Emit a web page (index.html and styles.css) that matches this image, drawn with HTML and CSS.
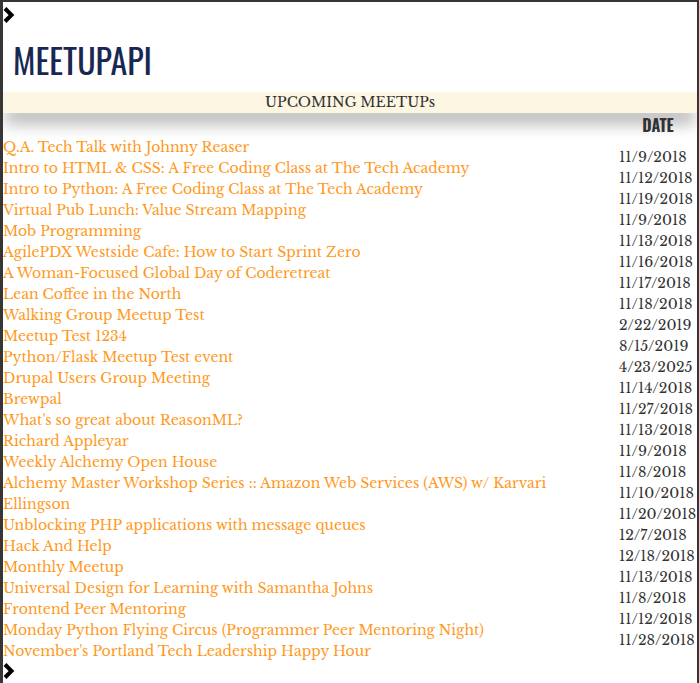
FILE: index.html
```
<!DOCTYPE html>
<html lang="en">
<head>
<meta charset="utf-8">
<title>MeetupAPI</title>
<link rel="stylesheet" href="styles.css">
</head>
<body>
<main class="panel">
  <svg class="chevron" viewBox="0 0 12 18" aria-hidden="true"><path d="M2 2.5 L8.5 9 L2 15.5"/></svg>
  <h1 class="title">MEETUPAPI</h1>
  <h2 class="banner">UPCOMING MEETUPs</h2>
  <div class="columns">
    <ul class="events">
      <li><a href="#">Q.A. Tech Talk with Johnny Reaser</a></li>
      <li><a href="#">Intro to HTML &amp; CSS: A Free Coding Class at The Tech Academy</a></li>
      <li><a href="#">Intro to Python: A Free Coding Class at The Tech Academy</a></li>
      <li><a href="#">Virtual Pub Lunch: Value Stream Mapping</a></li>
      <li><a href="#">Mob Programming</a></li>
      <li><a href="#">AgilePDX Westside Cafe: How to Start Sprint Zero</a></li>
      <li><a href="#">A Woman-Focused Global Day of Coderetreat</a></li>
      <li><a href="#">Lean Coffee in the North</a></li>
      <li><a href="#">Walking Group Meetup Test</a></li>
      <li><a href="#">Meetup Test 1234</a></li>
      <li><a href="#">Python/Flask Meetup Test event</a></li>
      <li><a href="#">Drupal Users Group Meeting</a></li>
      <li><a href="#">Brewpal</a></li>
      <li><a href="#">What's so great about ReasonML?</a></li>
      <li><a href="#">Richard Appleyar</a></li>
      <li><a href="#">Weekly Alchemy Open House</a></li>
      <li><a href="#">Alchemy Master Workshop Series :: Amazon Web Services (AWS) w/ Karvari Ellingson</a></li>
      <li><a href="#">Unblocking PHP applications with message queues</a></li>
      <li><a href="#">Hack And Help</a></li>
      <li><a href="#">Monthly Meetup</a></li>
      <li><a href="#">Universal Design for Learning with Samantha Johns</a></li>
      <li><a href="#">Frontend Peer Mentoring</a></li>
      <li><a href="#">Monday Python Flying Circus (Programmer Peer Mentoring Night)</a></li>
      <li><a href="#">November's Portland Tech Leadership Happy Hour</a></li>
    </ul>
    <section class="dates">
      <h3 class="dates-title">DATE</h3>
      <ul class="date-list">
        <li>11/9/2018</li>
        <li>11/12/2018</li>
        <li>11/19/2018</li>
        <li>11/9/2018</li>
        <li>11/13/2018</li>
        <li>11/16/2018</li>
        <li>11/17/2018</li>
        <li>11/18/2018</li>
        <li>2/22/2019</li>
        <li>8/15/2019</li>
        <li>4/23/2025</li>
        <li>11/14/2018</li>
        <li>11/27/2018</li>
        <li>11/13/2018</li>
        <li>11/9/2018</li>
        <li>11/8/2018</li>
        <li>11/10/2018</li>
        <li>11/20/2018</li>
        <li>12/7/2018</li>
        <li>12/18/2018</li>
        <li>11/13/2018</li>
        <li>11/8/2018</li>
        <li>11/12/2018</li>
        <li>11/28/2018</li>
      </ul>
    </section>
  </div>
  <svg class="chevron" viewBox="0 0 12 18" aria-hidden="true"><path d="M2 2.5 L8.5 9 L2 15.5"/></svg>
</main>
</body>
</html>
```
FILE: styles.css
```
* { box-sizing: border-box; }

body {
  margin: 0;
  padding: 2px 2px 0 3px;
  background: #373536;
  color: #333;
  font: 14px/21px "Libre Baskerville", "Liberation Serif", serif;
}

.panel {
  min-height: calc(100vh - 2px);
  padding-top: 4px;
  background: #fff;
  overflow: hidden;
}

.chevron {
  display: block;
  width: 12px;
  height: 18px;
  fill: none;
  stroke: #000;
  stroke-width: 4;
}

.title {
  margin: 14px 0 10px;
  padding-left: 10px;
  color: #192852;
  font: 400 34px/44px Oswald, "Liberation Sans Narrow", sans-serif;
}

.banner {
  margin: 0;
  background: #fdf6e3;
  box-shadow: 0 13px 16px -2px rgba(0, 0, 0, 0.29);
  font-size: 14px;
  font-weight: 400;
  text-align: center;
}

.columns {
  display: flex;
  justify-content: space-between;
}

ul {
  margin: 0;
  padding: 0;
  list-style: none;
}

.events {
  flex: 1;
  max-width: 590px;
  padding-top: 24px;
}

.events a {
  color: #ff991c;
  text-decoration: none;
}

.dates {
  width: 78px;
}

.dates-title {
  margin: 0 0 10px;
  font: 700 16px/24px Oswald, "Liberation Sans Narrow", sans-serif;
  text-align: center;
}
```
